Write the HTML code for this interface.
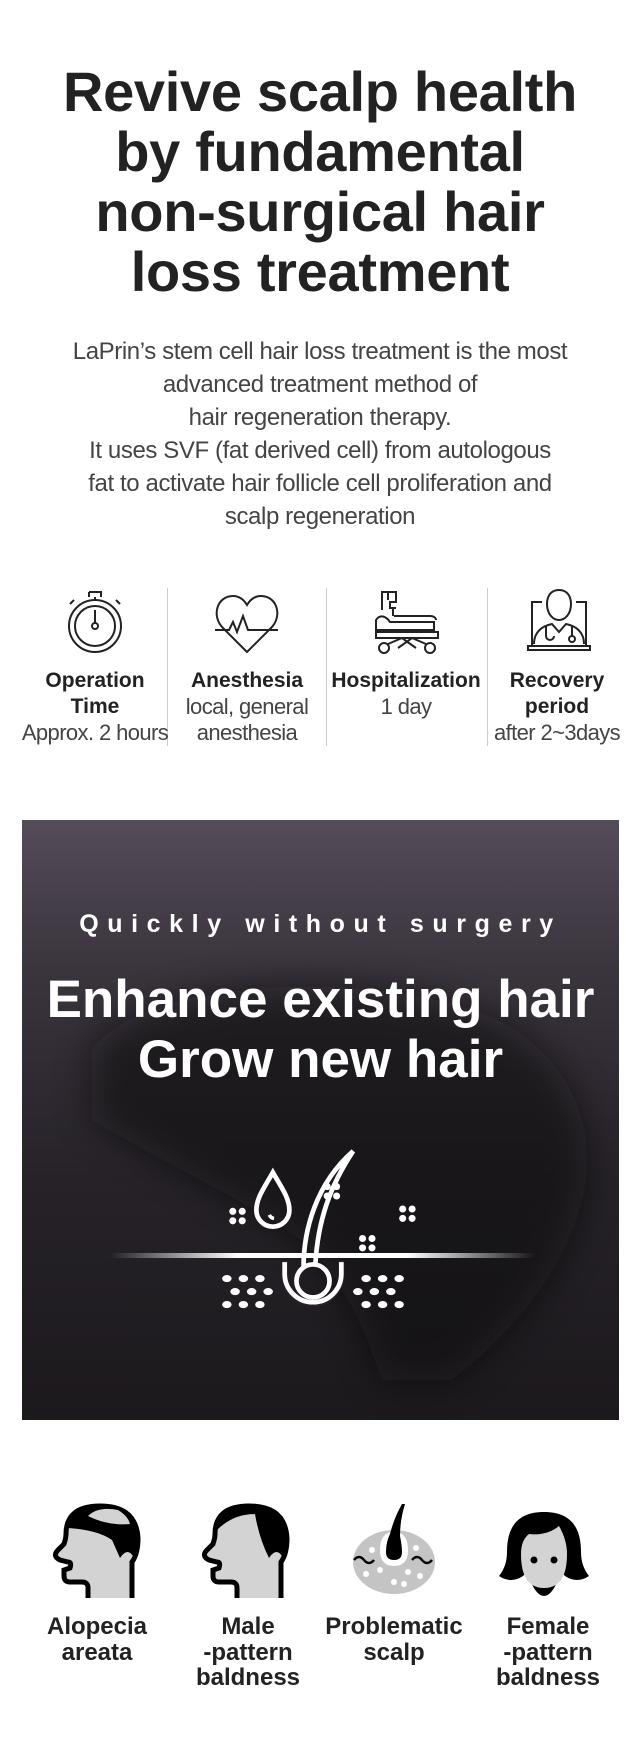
<!DOCTYPE html>
<html><head><meta charset="utf-8"><style>
*{margin:0;padding:0;box-sizing:border-box}
body{width:640px;height:1749px;background:#fff;position:relative;font-family:"Liberation Sans",Arial,sans-serif;color:#222;overflow:hidden}
.a{position:absolute}
h1{position:absolute;left:0;width:640px;top:62px;text-align:center;font-size:56px;line-height:60px;font-weight:bold;color:#222;letter-spacing:-0.3px}
.p{position:absolute;left:0;width:640px;top:335px;text-align:center;font-size:24px;line-height:33px;color:#444;letter-spacing:-0.4px}
.col{position:absolute;top:668px;text-align:center;width:170px}
.col b{display:block;font-size:21px;line-height:26px;color:#222}
.col span{display:block;font-size:22px;line-height:26px;color:#444;letter-spacing:-0.6px}
.dv{position:absolute;top:588px;height:158px;width:1px;background:#ccc}
.banner{position:absolute;left:22px;top:820px;width:597px;height:600px;background:linear-gradient(#544c59 0%,#3a343d 25%,#262228 60%,#1c191d 100%);overflow:hidden}
.lab{position:absolute;top:1614px;width:160px;text-align:center;font-size:24px;line-height:25.5px;font-weight:bold;color:#222}
</style></head><body>
<h1>Revive scalp health<br>by fundamental<br>non-surgical hair<br>loss treatment</h1>
<div class="p">LaPrin’s stem cell hair loss treatment is the most<br>advanced treatment method of<br>hair regeneration therapy.<br>It uses SVF (fat derived cell) from autologous<br>fat to activate hair follicle cell proliferation and<br>scalp regeneration</div>

<div class="dv" style="left:167px"></div><div class="dv" style="left:326px"></div><div class="dv" style="left:487px"></div>

<svg class="a" style="left:63px;top:586px" width="64" height="70" viewBox="0 0 64 70" fill="none" stroke="#222" stroke-width="2">
<circle cx="32" cy="40" r="26"/><circle cx="32" cy="40" r="20"/>
<path d="M26 6h12v5M26 6v5M32 11v3"/><path d="M7 18l4-4M57 18l-4-4"/>
<path d="M32 24v13"/><circle cx="32" cy="40" r="3"/></svg>

<svg class="a" style="left:213px;top:592px" width="68" height="62" viewBox="0 0 68 62" fill="none" stroke="#222" stroke-width="2">
<path d="M34 60L10 36C-2 24 4 4 20 4c7 0 11 4 14 9c3-5 7-9 14-9c16 0 22 20 10 32z"/>
<path d="M2 38h14l4-8l4 10l6-16l5 14h30"/></svg>

<svg class="a" style="left:372px;top:588px" width="70" height="68" viewBox="0 0 70 68" fill="none" stroke="#222" stroke-width="2">
<path d="M10 22V4h6v8M16 4h8v10h-6v6h6M21 20v8"/>
<path d="M4 32c4-6 10-4 14 2h44v8H4zM22 28h36c4 0 6 2 6 4"/>
<path d="M4 44h62v6H4z"/>
<circle cx="12" cy="60" r="5"/><circle cx="58" cy="60" r="5"/>
<path d="M16 56l14-6l14 10M26 60l14-10l14 6"/></svg>

<svg class="a" style="left:526px;top:588px" width="66" height="66" viewBox="0 0 66 66" fill="none" stroke="#222" stroke-width="2">
<path d="M33 2c-8 0-12 6-12 14c0 10 6 16 12 16s12-6 12-16c0-8-4-14-12-14z"/>
<path d="M16 14H6v44h54V14H50"/><path d="M2 58h62v4H2z"/>
<path d="M8 56c0-12 8-18 18-20l7 8l7-8c10 2 18 8 18 20"/>
<path d="M20 38v10a4 4 0 0 0 8 0M46 38v10"/><circle cx="46" cy="51" r="3"/></svg>

<div class="col" style="left:10px"><b>Operation<br>Time</b><span>Approx. 2 hours</span></div>
<div class="col" style="left:162px"><b>Anesthesia</b><span>local, general<br>anesthesia</span></div>
<div class="col" style="left:321px"><b>Hospitalization</b><span>1 day</span></div>
<div class="col" style="left:472px"><b>Recovery<br>period</b><span>after 2~3days</span></div>

<div class="banner">
<svg class="a" style="left:0;top:0" width="597" height="600">
<defs><filter id="bl"><feGaussianBlur stdDeviation="18"/></filter></defs>
<g filter="url(#bl)" fill="#0e0c0f" opacity="0.55">
<path d="M70 230C120 160 330 150 450 190C540 220 580 300 560 380C540 460 480 520 430 560L360 560C330 470 300 430 250 400C200 370 120 330 70 300Z"/>
</g></svg>
<div class="a" style="left:0;width:597px;top:90px;text-align:center;color:#fff;font-weight:bold;font-size:25px;letter-spacing:8.6px">Quickly without surgery</div>
<div class="a" style="left:0;width:597px;top:150px;text-align:center;color:#fff;font-weight:bold;font-size:53px;line-height:60px">Enhance existing hair<br>Grow new hair</div>
<svg class="a" style="left:0;top:0" width="597" height="600" fill="none" stroke="#fff">
<defs><linearGradient id="ln" x1="0" x2="1"><stop offset="0" stop-color="#fff" stop-opacity="0"/><stop offset=".3" stop-color="#fff"/><stop offset=".7" stop-color="#fff"/><stop offset="1" stop-color="#fff" stop-opacity="0"/></linearGradient></defs>
<rect x="88" y="433" width="425" height="5" fill="url(#ln)" stroke="none"/>
<g transform="translate(291 435) scale(1.18) translate(-291 -430)">
<path d="M267 435v12a24 24 0 0 0 48 0v-12" stroke-width="5" stroke="#2a252b"/>
<path d="M267 436v10a24 24 0 0 0 48 0v-10" stroke-width="4"/>
<circle cx="291" cy="452" r="14" stroke-width="4"/>
<path d="M283 440c0-30 10-70 42-98c-20 30-30 60-32 96" stroke-width="4"/>
<path d="M257 360c-8 14-14 22-14 32a14 14 0 0 0 28 0c0-10-6-18-14-32z" stroke-width="4"/>
<path d="M254 396a5 5 0 0 0 4 3" stroke-width="3"/>
<g fill="#fff" stroke="none">
<circle cx="303" cy="372" r="3"/><circle cx="311" cy="372" r="3"/><circle cx="303" cy="380" r="3"/><circle cx="311" cy="380" r="3"/>
<circle cx="223" cy="393" r="3"/><circle cx="231" cy="393" r="3"/><circle cx="223" cy="401" r="3"/><circle cx="231" cy="401" r="3"/>
<circle cx="367" cy="391" r="3"/><circle cx="375" cy="391" r="3"/><circle cx="367" cy="399" r="3"/><circle cx="375" cy="399" r="3"/>
<circle cx="333" cy="416" r="3"/><circle cx="341" cy="416" r="3"/><circle cx="333" cy="424" r="3"/><circle cx="341" cy="424" r="3"/>
<g id="dl"><ellipse cx="218" cy="450" rx="4" ry="3"/><ellipse cx="232" cy="450" rx="4" ry="3"/><ellipse cx="246" cy="450" rx="4" ry="3"/>
<ellipse cx="225" cy="461" rx="4" ry="3"/><ellipse cx="239" cy="461" rx="4" ry="3"/><ellipse cx="253" cy="461" rx="4" ry="3"/>
<ellipse cx="218" cy="472" rx="4" ry="3"/><ellipse cx="232" cy="472" rx="4" ry="3"/><ellipse cx="246" cy="472" rx="4" ry="3"/></g>
<g transform="translate(582 0) scale(-1 1)"><use href="#dl"/></g>
</g></g></svg>
</div>

<svg class="a" style="left:48px;top:1502px" width="95" height="96" viewBox="0 0 95 96">
<path d="M40 96V86Q40 80 34 80H22Q16 80 16 74V68L22 66Q24 60 20 60L12 58Q4 54 10 48L16 42Q18 36 18 32Q18 4 52 4Q88 4 90 36Q90 52 84 60V96" fill="#d3d3d3" stroke="#000" stroke-width="5"/>
<path d="M18 34Q18 4 52 4Q88 4 90 36Q90 48 86 56Q80 44 72 56L64 38Q50 28 20 26Z" fill="#000"/>
<path d="M40 14Q50 4 70 8Q80 14 82 22Q60 24 40 14Z" fill="#d3d3d3"/>
</svg>
<svg class="a" style="left:197px;top:1502px" width="95" height="96" viewBox="0 0 95 96">
<path d="M40 96V86Q40 80 34 80H22Q16 80 16 74V68L22 66Q24 60 20 60L12 58Q4 54 10 48L16 42Q18 36 18 32Q18 4 52 4Q88 4 90 36Q90 52 84 60V96" fill="#d3d3d3" stroke="#000" stroke-width="5"/>
<path d="M18 34Q18 4 52 4Q88 4 90 36Q90 48 86 56Q80 44 72 56Q62 36 58 12Q36 12 20 28Z" fill="#000"/>
</svg>
<svg class="a" style="left:350px;top:1502px" width="88" height="94" viewBox="0 0 88 94">
<ellipse cx="44" cy="60" rx="41" ry="32" fill="#c4c4c4"/>
<path d="M30 48Q30 30 44 30Q58 30 58 48Q58 64 44 64Q30 64 30 48Z" fill="#fff"/>
<path d="M36 50Q36 40 40 32Q44 16 52 2L55 2Q50 18 50 34Q52 44 52 50Q52 58 44 58Q36 58 36 50Z" fill="#000"/>
<path d="M4 58q5-6 10 0t10 0M62 58q5-6 10 0t10 0" stroke="#000" stroke-width="2.5" fill="none"/>
<g fill="#fff"><circle cx="16" cy="72" r="3"/><circle cx="30" cy="68" r="3"/><circle cx="44" cy="80" r="3"/><circle cx="58" cy="70" r="3"/><circle cx="70" cy="74" r="3"/><circle cx="54" cy="82" r="3"/><circle cx="22" cy="48" r="3"/><circle cx="66" cy="46" r="3"/></g>
</svg>
<svg class="a" style="left:497px;top:1510px" width="94" height="88" viewBox="0 0 94 88">
<path d="M47 2C18 2 10 20 10 42Q10 56 2 66Q14 74 26 66L30 62Q38 86 47 86Q56 86 64 62L68 66Q80 74 92 66Q84 56 84 42C84 20 76 2 47 2Z" fill="#000"/>
<path d="M24 44Q24 30 32 24Q50 26 62 16Q70 30 70 44Q70 78 47 78Q24 78 24 44Z" fill="#d3d3d3"/>
<circle cx="37" cy="50" r="3.5"/><circle cx="57" cy="50" r="3.5"/>
</svg>

<div class="lab" style="left:17px">Alopecia<br>areata</div>
<div class="lab" style="left:168px">Male<br>-pattern<br>baldness</div>
<div class="lab" style="left:314px">Problematic<br>scalp</div>
<div class="lab" style="left:468px">Female<br>-pattern<br>baldness</div>
</body></html>
